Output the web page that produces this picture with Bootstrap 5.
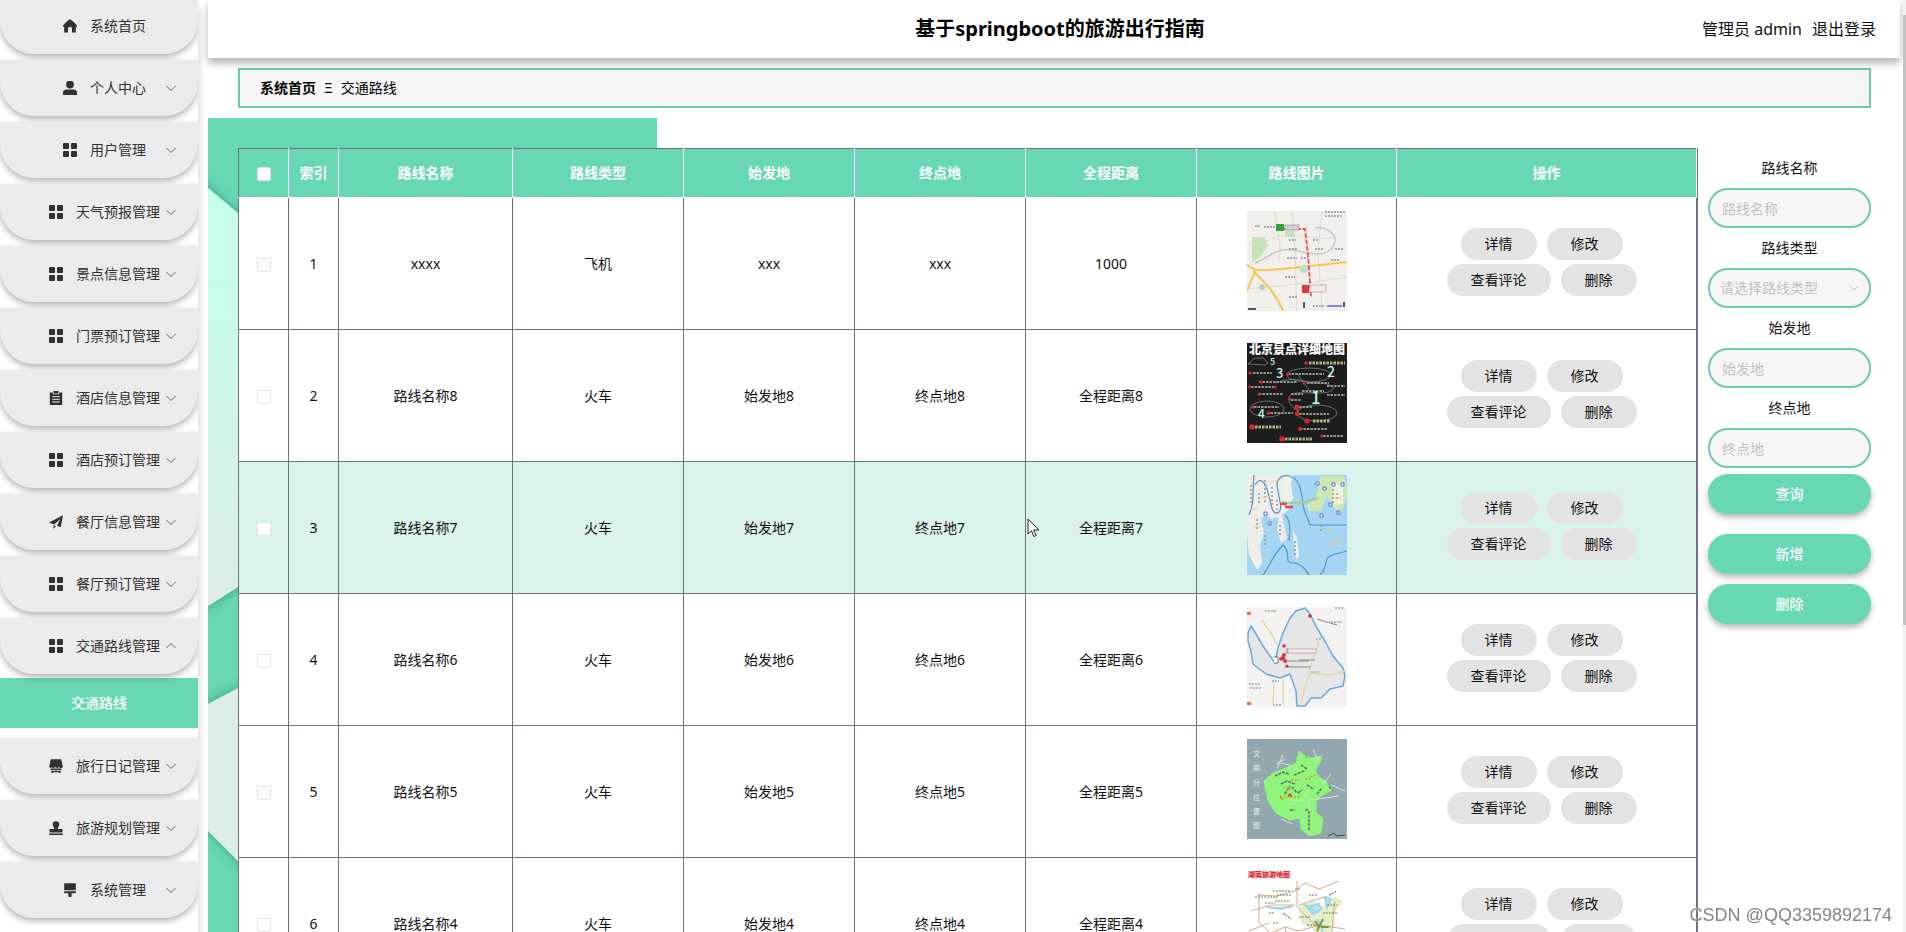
<!DOCTYPE html>
<html lang="zh-CN">
<head>
<meta charset="utf-8">
<meta name="viewport" content="width=device-width, initial-scale=1">
<title>基于springboot的旅游出行指南</title>
<link href="https://cdn.jsdelivr.net/npm/bootstrap@5.3.0/dist/css/bootstrap.min.css" rel="stylesheet">
<style>
:root{--mint:#68d7b4;--line:#6f6f82}
body{font-family:"Noto Sans","Noto Sans CJK SC",sans-serif;font-size:14px;line-height:20px;color:#111;background:#fff}
a{color:inherit;text-decoration:none}
/* sidebar */
.side-menu{width:198px;box-shadow:2px 8px 6px rgba(0,0,0,.14)}
.side-menu nav{margin-top:-8px}
.side-item{height:56px;margin-top:6px;padding-left:11px;gap:13px;background:#ebebeb;border-radius:0 0 34px 34px;box-shadow:0 3px 6px rgba(0,0,0,.3);color:#303133}
.side-item .ico{width:14px;height:14px;fill:#303133}
.side-item .chev{right:22px;width:10px;height:10px;fill:none;stroke:#666}
.side-sub{height:50px;margin:4px 0;background:var(--mint);color:#fff;font-weight:500}
/* header */
.main-area{margin-left:10px;margin-right:6px}
.top-head{height:58px;box-shadow:0 5px 8px rgba(0,0,0,.3);padding:0 24px 0 36px}
.top-head h1{font-size:20px;line-height:28px;color:#000}
.top-head .who{font-size:16px;line-height:24px;gap:10px}
.crumbs{margin:10px 29px 10px 30px;height:40px;padding:0 20px;border:2px solid #6cc9aa;background:#f7f6f6;color:#000}
/* content */
.stage{padding:30px 29px 0 30px}
.backdrop-art{width:449px}
.tbl-wrap{border-right:1px solid var(--line)}
.route-table{table-layout:fixed;width:100%;border-collapse:collapse;text-align:center;color:#111;background:#fff}
.route-table td{border:1px solid var(--line);height:132px;padding:0;vertical-align:middle}
.route-table th{height:49px;padding:0;background:var(--mint);color:#fff;font-weight:700;border:1px solid #fff;border-top-color:var(--line)}
.route-table th:first-child{border-left-color:var(--line)}
.route-table tr.hovered td{background:#daf3ea}
.route-table .form-check-input{width:14px;height:14px;margin:0;border:1px solid #e2e3e6;border-radius:2px;background-color:#fff;vertical-align:middle}
.w-pick{width:50px}.w-name{width:174px}.w-pic{width:200px}.w-ops{width:300px}
.pic{width:100px;height:100px;display:block;margin:0 auto 6px}
.ops{row-gap:4px;padding:0 40px 4px}
.pill{height:32px;padding:0 24px;margin-right:10px;border:0;border-radius:16px;background:#e3e3e3;color:#111}
/* filter column */
.filter-col{width:163px;margin-left:10px}
.filter-col label{height:40px;line-height:40px;text-align:center;display:block;color:#111}
.filter-col .fld{height:40px;width:100%;border:2px solid #6cc9aa;border-radius:20px;background-color:#f7f6f7;padding:0 12px;font-size:14px;color:#c0c1c6}
.filter-col .fld::placeholder{color:#c0c1c6;opacity:1}
.filter-col select.fld{padding:0 10px;appearance:none;background-image:url("data:image/svg+xml,%3Csvg xmlns='http://www.w3.org/2000/svg' width='10' height='10' fill='none' stroke='%23c0c4cc'%3E%3Cpath d='M1 3l4 4 4-4'/%3E%3C/svg%3E");background-repeat:no-repeat;background-position:right 10px center}
.act{height:40px;width:100%;border:0;border-radius:20px;background:var(--mint);color:#fff;font-weight:500;box-shadow:0 3px 6px rgba(0,0,0,.3)}
.act-search{margin:6px 0 20px}
.act-add{margin-bottom:10px}
/* overlays */
.scroll-track{top:0;right:0;width:3px;background:#f1f1f1}
.scroll-thumb{margin-top:15px;height:65.4%;background:#c1c1c1}
.stamp{right:14px;bottom:5px;font:18px/24px "Liberation Sans",sans-serif;color:#858585;text-shadow:0 0 2px #fff}
.pointer-arrow{left:1027px;top:518px;width:13px;height:20px}
</style>
</head>
<body class="vh-100 overflow-hidden">
<svg class="d-none" xmlns="http://www.w3.org/2000/svg">
  <symbol id="i-grid" viewBox="0 0 14 14"><rect width="6" height="6" rx="1"/><rect x="8" width="6" height="6" rx="1"/><rect y="8" width="6" height="6" rx="1"/><rect x="8" y="8" width="6" height="6" rx="1"/></symbol>
  <symbol id="i-home" viewBox="0 0 14 14"><path d="M7 .3C7.500.3 14 5.500 14 7.200c0 .6-.5.800-1.200.8v5.500H9V9.700a2 2 0 0 0-4 0v3.800H1.200V8C.5 8 0 7.800 0 7.200 0 5.500 6.500.3 7 .3z"/></symbol>
  <symbol id="i-user" viewBox="0 0 14 14"><circle cx="7" cy="3.500" r="3.900"/><path d="M0 14v-2.200C0 9.700 1.600 8.600 3.600 8.600h6.800c2 0 3.600 1.100 3.600 3.200V14z"/></symbol>
  <symbol id="i-order" viewBox="0 0 14 14"><path d="M.8 1.500h3V3.300h6.400V1.500h3V14H.8zM4.500 0h5v2.500h-5z"/><path d="M3.200 5.700h7.600M3.200 8.300h7.600M3.200 11h7.600" stroke="#ebebeb" stroke-width="1"/></symbol>
  <symbol id="i-send" viewBox="0 0 14 14"><path d="M14 .3L11.700 12.300 8 10.800 11.300 4 5.200 9.500 0 7.400zM4.500 10.200l2.500 1L4.300 13.800z"/></symbol>
  <symbol id="i-shop" viewBox="0 0 14 14"><path d="M1.800.3h10.400L13.700 7c.3 1.300-.6 2-1.600 2S10.400 8.500 10 8c-.5.600-1 1-1.800 1S6.800 8.500 6.400 8c-.5.600-1 1-1.800 1S3.300 8.600 3 8.200C2.500 8.700 2.200 9 1.600 9 .7 9 0 8.200.3 7zM1.600 9.500h10.800v1.700H1.600zM2.500 12h9v2h-1.500v-.8H4v.8H2.500z"/></symbol>
  <symbol id="i-stamp" viewBox="0 0 14 14"><path d="M5.200 8C5.400 6.500 3.700 5.500 3.700 3.600a3.300 3.300 0 0 1 6.600 0C10.300 5.500 8.600 6.500 8.800 8H13.500v3.500H.5V8zM.2 12.600h13.600V14H.2z"/></symbol>
  <symbol id="i-brush" viewBox="0 0 14 14"><path d="M1.200.3h11.600v7H1.200zM1.200 8.300h11.600v2H8.600V13.500l-1.600 1-1.600-1V10.300H1.200z"/></symbol>
  <symbol id="i-down" viewBox="0 0 10 10"><path d="M.5 3L5 7.500 9.500 3"/></symbol>
  <symbol id="i-up" viewBox="0 0 10 10"><path d="M.5 7L5 2.500 9.500 7"/></symbol>
</svg>

<div class="d-flex h-100">
  <aside class="side-menu flex-shrink-0 h-100">
    <nav class="d-flex flex-column overflow-hidden">
      <a href="#" class="side-item position-relative d-flex align-items-center justify-content-center"><svg class="ico"><use href="#i-home"/></svg>系统首页</a>
      <a href="#" class="side-item position-relative d-flex align-items-center justify-content-center"><svg class="ico"><use href="#i-user"/></svg>个人中心<svg class="chev position-absolute"><use href="#i-down"/></svg></a>
      <a href="#" class="side-item position-relative d-flex align-items-center justify-content-center"><svg class="ico"><use href="#i-grid"/></svg>用户管理<svg class="chev position-absolute"><use href="#i-down"/></svg></a>
      <a href="#" class="side-item position-relative d-flex align-items-center justify-content-center"><svg class="ico"><use href="#i-grid"/></svg>天气预报管理<svg class="chev position-absolute"><use href="#i-down"/></svg></a>
      <a href="#" class="side-item position-relative d-flex align-items-center justify-content-center"><svg class="ico"><use href="#i-grid"/></svg>景点信息管理<svg class="chev position-absolute"><use href="#i-down"/></svg></a>
      <a href="#" class="side-item position-relative d-flex align-items-center justify-content-center"><svg class="ico"><use href="#i-grid"/></svg>门票预订管理<svg class="chev position-absolute"><use href="#i-down"/></svg></a>
      <a href="#" class="side-item position-relative d-flex align-items-center justify-content-center"><svg class="ico"><use href="#i-order"/></svg>酒店信息管理<svg class="chev position-absolute"><use href="#i-down"/></svg></a>
      <a href="#" class="side-item position-relative d-flex align-items-center justify-content-center"><svg class="ico"><use href="#i-grid"/></svg>酒店预订管理<svg class="chev position-absolute"><use href="#i-down"/></svg></a>
      <a href="#" class="side-item position-relative d-flex align-items-center justify-content-center"><svg class="ico"><use href="#i-send"/></svg>餐厅信息管理<svg class="chev position-absolute"><use href="#i-down"/></svg></a>
      <a href="#" class="side-item position-relative d-flex align-items-center justify-content-center"><svg class="ico"><use href="#i-grid"/></svg>餐厅预订管理<svg class="chev position-absolute"><use href="#i-down"/></svg></a>
      <a href="#" class="side-item position-relative d-flex align-items-center justify-content-center"><svg class="ico"><use href="#i-grid"/></svg>交通路线管理<svg class="chev position-absolute"><use href="#i-up"/></svg></a>
      <a href="#" class="side-sub d-flex align-items-center justify-content-center">交通路线</a>
      <a href="#" class="side-item position-relative d-flex align-items-center justify-content-center"><svg class="ico"><use href="#i-shop"/></svg>旅行日记管理<svg class="chev position-absolute"><use href="#i-down"/></svg></a>
      <a href="#" class="side-item position-relative d-flex align-items-center justify-content-center"><svg class="ico"><use href="#i-stamp"/></svg>旅游规划管理<svg class="chev position-absolute"><use href="#i-down"/></svg></a>
      <a href="#" class="side-item mb-3 position-relative d-flex align-items-center justify-content-center"><svg class="ico"><use href="#i-brush"/></svg>系统管理<svg class="chev position-absolute"><use href="#i-down"/></svg></a>
    </nav>
  </aside>

  <div class="main-area flex-grow-1 d-flex flex-column">
    <header class="top-head row g-0 align-items-center flex-shrink-0">
      <div class="col"></div>
      <h1 class="col-auto m-0 fw-bold">基于springboot的旅游出行指南</h1>
      <div class="who col d-flex justify-content-end"><span>管理员 admin</span><a href="#">退出登录</a></div>
    </header>
    <div class="crumbs d-flex align-items-center gap-2 flex-shrink-0"><a href="#" class="fw-bold">系统首页</a><span>Ξ</span><span>交通路线</span></div>

    <main class="stage position-relative d-flex align-items-start flex-grow-1 overflow-hidden">
      <svg class="backdrop-art position-absolute top-0 start-0 h-100" aria-hidden="true">
        <defs>
          <linearGradient id="ga" x1="0" y1="0" x2="0" y2="1"><stop offset="0" stop-color="#c3ffea"/><stop offset=".35" stop-color="#c8fbea"/><stop offset="1" stop-color="#dfebe8"/></linearGradient>
          <filter id="sh" x="-20%" y="-20%" width="140%" height="140%"><feDropShadow dx="0" dy="0" stdDeviation="6" flood-color="#1c5a46" flood-opacity=".45"/></filter>
        </defs>
        <rect width="449" height="100%" fill="#68d7b4"/>
        <path d="M-40 37L0 70 30 95 90 145V433L30 469 0 488-40 512z" fill="url(#ga)" filter="url(#sh)"/>
        <path d="M-40 607L0 586 30 570 90 538V803L30 743 0 713-40 673z" fill="#dbede6" filter="url(#sh)"/>
      </svg>

      <div class="tbl-wrap position-relative flex-grow-1">
        <table class="route-table">
          <colgroup><col class="w-pick"><col class="w-pick"><col class="w-name"><col><col><col><col><col class="w-pic"><col class="w-ops"></colgroup>
          <thead><tr><th><input class="form-check-input" type="checkbox" aria-label="全选"></th><th>索引</th><th>路线名称</th><th>路线类型</th><th>始发地</th><th>终点地</th><th>全程距离</th><th>路线图片</th><th>操作</th></tr></thead>
          <tbody>
            <tr><td><input class="form-check-input" type="checkbox" aria-label="选择1"></td><td>1</td><td>xxxx</td><td>飞机</td><td>xxx</td><td>xxx</td><td>1000</td>
              <td><svg class="pic" viewBox="0 0 100 100"><rect width="100" height="100" fill="#f1efeb"/><path d="M5 26h13l3 8-6 10-10 8zM38 20h10v6H38z" fill="#c6e3b8"/><path d="M0 32c20 5 20-8 40-8s30 6 48 2M28 0c0 20 8 30 4 50M0 78L60 72l40-6M75 0l-4 40 4 60M45 0c4 30 3 60 5 100" stroke="#ddd9d2" fill="none"/><path d="M8 52c10-3 18-12 28-13 12-2 20 4 34 4 10 0 18-6 18-14S76 15 68 17" stroke="#c9c9c9" stroke-width="1.500" fill="none"/><path d="M0 53c4 6 12 7 22 6 20-1 60-6 78-8M8 60L0 80M6 60c10 10 22 20 30 40" stroke="#f6c552" stroke-width="2" fill="none"/><path d="M36 18h22l3 26 3 42" stroke="#e7505e" stroke-width="1.800" stroke-dasharray="5 1.500" fill="none"/><rect x="29" y="13" width="8" height="7" fill="#35a33a"/><rect x="38" y="14" width="14" height="5" fill="#d3cdd8" stroke="#777" stroke-width=".5"/><rect x="55" y="74" width="7" height="8" fill="#d83842"/><rect x="63" y="74" width="16" height="7" fill="#f6e8ea" stroke="#999" stroke-width=".6"/><circle cx="57" cy="58" r="4" fill="#bce0c4"/><circle cx="15" cy="76" r="3" fill="#bccfc4"/><path d="M42 38h8M78 1h20M78 5h18M8 15h6M17 16h11M42 29h7M66 29h6M68 38h8M88 38h9M40 47h10M54 47h7M84 49h9M38 66h10M42 86h8M66 95h12" stroke="#aaa" stroke-width="2" stroke-dasharray="2 1"/><path d="M80 95h15" stroke="#8a85e8" stroke-width="2"/><path d="M57 91v6M97 91v5M1 98h8" stroke="#555" stroke-width="2"/></svg></td>
              <td><div class="ops d-flex flex-wrap justify-content-center"><button class="pill" type="button">详情</button><button class="pill" type="button">修改</button><button class="pill" type="button">查看评论</button><button class="pill" type="button">删除</button></div></td></tr>
            <tr><td><input class="form-check-input" type="checkbox" aria-label="选择2"></td><td>2</td><td>路线名称8</td><td>火车</td><td>始发地8</td><td>终点地8</td><td>全程距离8</td>
              <td><svg class="pic overflow-visible" viewBox="0 0 100 100" font-family="Noto Sans CJK SC"><rect width="100" height="100" fill="#1d1d1d"/><text x="2" y="11" font-size="12" font-weight="900" fill="#fff">北京景点详细地图</text><g fill="none" stroke="#6f8a80" stroke-width=".8"><path d="M1 21l7-6h8l5 5-3 2z"/><ellipse cx="62" cy="32" rx="22" ry="7"/><ellipse cx="20" cy="66" rx="17" ry="8"/><ellipse cx="70" cy="70" rx="20" ry="8"/><path d="M28 40c20-8 30 0 42 0s20 4 14 8-30 0-38 3-4 12 6 18M50 30l14 20"/></g><g stroke="#8f948f" stroke-width="2.200" stroke-dasharray="2.500 1"><path d="M6 30h19M41 31h36M12 39h38M60 40h22M4 44h24M55 48h22M12 51h24M44 51h12M44 57h10M7 64h25M20 70h26M52 64h14M52 71h30M53 86h28M76 93h20M80 43h18M80 52h18"/><path d="M62 20h36M8 84h26M66 78h17M38 96h28" stroke="#b0b284" stroke-width="3"/></g><g fill="#d9242d"><circle cx="3" cy="30" r="1.800"/><circle cx="41" cy="31" r="1.800"/><circle cx="59" cy="20" r="1.800"/><circle cx="14" cy="39" r="1.800"/><circle cx="3" cy="44" r="1.800"/><circle cx="57" cy="40" r="1.600"/><circle cx="12" cy="51" r="1.600"/><circle cx="28" cy="44" r="1.600"/><circle cx="43" cy="56" r="1.600"/><circle cx="50" cy="64" r="2.600"/><circle cx="50" cy="71" r="2.200"/><circle cx="60" cy="78" r="2.600"/><circle cx="5" cy="84" r="2.800"/><circle cx="35" cy="96" r="2.800"/><circle cx="53" cy="86" r="2"/><circle cx="22" cy="70" r="1.800"/><circle cx="6" cy="64" r="1.600"/><circle cx="75" cy="93" r="1.600"/></g><g fill="#c4f3e6" font-weight="500"><text x="23" y="22" font-size="9">5</text><text x="29" y="35" font-size="13">3</text><text x="80" y="34" font-size="14">2</text><text x="64" y="61" font-size="17">1</text><text x="11" y="75" font-size="12">4</text></g></svg></td>
              <td><div class="ops d-flex flex-wrap justify-content-center"><button class="pill" type="button">详情</button><button class="pill" type="button">修改</button><button class="pill" type="button">查看评论</button><button class="pill" type="button">删除</button></div></td></tr>
            <tr class="hovered"><td><input class="form-check-input" type="checkbox" aria-label="选择3"></td><td>3</td><td>路线名称7</td><td>火车</td><td>始发地7</td><td>终点地7</td><td>全程距离7</td>
              <td><svg class="pic" viewBox="0 0 100 100"><rect width="100" height="100" fill="#a5d5f3"/><path d="M0 0h37l5 12v22l-7 6 3 14 2 10-6 4-4-14 2-12-8 2-5-6-5 6 3 14-4 12 2 18-5 7-8-15-2-20z" fill="#eeedea"/><path d="M38 0h8l-2 9 2 14-4 8-6-2zM46 55l4 8 2 18-3 3-2-16z" fill="#eef2e8"/><path d="M73 1h24l3 12v8l-6 17-8-6-6-12-6 16h-12l-2-5 8-8 4-12z" fill="#cfe7b5"/><path d="M84 8h12v20l-9 3z" fill="#eef0df"/><path d="M7 0C5 20 8 25 2 40M8 10c5-8 9-4 12 4 4 12 4 25 10 24 8-1 0-20 0-30 4-12 18-8 22 2 5 12 2 22 8 32 4 8 0 8 9 8h31M38 40c6 6 5 14 4 26M16 100c8-10 8-18 20-30 9 8 0 18 10 18 8 0 12 6 16 12M73 100c10-10 2-16 12-20l15-4" stroke="#4a96cc" stroke-width="1.200" fill="none"/><path d="M35 27c12 2 26 0 36-4" stroke="#a2cf8d" stroke-width="2" fill="none"/><g fill="#fff" stroke="#4f70d8"><path d="M69 7h3v3h-3zM76 12h3v3h-3zM85 8h3v3h-3zM94 8h3v3h-3zM82 28h3v3h-3zM90 36h3v3h-3zM73 39h3v3h-3zM17 37h3v3h-3zM21 47h3v3h-3z"/></g><path d="M4 10v20M12 18v12M18 5v22M25 12v24M30 25v14M18 60v12M10 44v10M33 50v10M48 66v14M74 50v8M86 14v14M90 18v8" stroke="#9b948b" stroke-width="1.500" stroke-dasharray="2 2"/><path d="M33 29h7M38 32h8" stroke="#e14b51" stroke-width="2.500"/><path d="M14 22h9M3 34h8M24 6h8M6 52h8M36 58h10M78 54h8M82 70l12-6M86 23h8" stroke="#e5c98a" stroke-width="1.200"/></svg></td>
              <td><div class="ops d-flex flex-wrap justify-content-center"><button class="pill" type="button">详情</button><button class="pill" type="button">修改</button><button class="pill" type="button">查看评论</button><button class="pill" type="button">删除</button></div></td></tr>
            <tr><td><input class="form-check-input" type="checkbox" aria-label="选择4"></td><td>4</td><td>路线名称6</td><td>火车</td><td>始发地6</td><td>终点地6</td><td>全程距离6</td>
              <td><svg class="pic" viewBox="0 0 100 100"><rect width="100" height="100" fill="#f4f3f1"/><path d="M1 26L4 19 9 27 16 39 28 56 31 41 36 26 43 11 49 4 58 1 63 7 70 21 79 36 86 49 96 61 98 69 96 79 83 82 74 91 64 91 58 99H50L49 84 43 67 33 71 19 67 6 57 4 44 1 34z" fill="#e6e6e6" stroke="#68a9dc" stroke-width="1.500" stroke-linejoin="round"/><path d="M15 13l10 15 5 10M36 72v25M27 72l-1 25M54 96l4-16 5-14 20 2 14-4M62 64l10-30" stroke="#ddd8a8" stroke-width="1.300" fill="none"/><path d="M38 60h26M40 47v-6M52 53h16M70 12l20 6M40 54h22" stroke="#888" fill="none"/><rect x="41" y="42" width="28" height="4" fill="#f8eeee" stroke="#a88" stroke-width=".6"/><path d="M18 4h12M78 15h18M2 77h12M3 81h11M69 32h6M25 74h7M26 98h8M64 65h8M88 1h9" stroke="#bbb" stroke-width="2" stroke-dasharray="2 1"/><g fill="#d8343c"><circle cx="63" cy="9" r="1.800"/><circle cx="37" cy="39" r="1.800"/><circle cx="37" cy="48" r="2"/><circle cx="34" cy="52" r="1.800"/><circle cx="38" cy="54" r="2"/><circle cx="36" cy="51" r="2"/><circle cx="40" cy="59" r="1.600"/></g><path d="M27 50h4v6h-4" stroke="#555" stroke-width=".8" fill="#fff"/><path d="M0 5h4v3H0zM0 95h4v3H0z" fill="#e5713c"/></svg></td>
              <td><div class="ops d-flex flex-wrap justify-content-center"><button class="pill" type="button">详情</button><button class="pill" type="button">修改</button><button class="pill" type="button">查看评论</button><button class="pill" type="button">删除</button></div></td></tr>
            <tr><td><input class="form-check-input" type="checkbox" aria-label="选择5"></td><td>5</td><td>路线名称5</td><td>火车</td><td>始发地5</td><td>终点地5</td><td>全程距离5</td>
              <td><svg class="pic" viewBox="0 0 100 100" font-family="Noto Sans CJK SC"><rect width="100" height="100" fill="#92a8ae"/><path d="M52 12L58 17 64 19 75 17 72 25 68 32 73 39 79 42 81 47 86 50 74 57 69 62V74L76 79 74 94 63 97 54 90 53 79 43 81 29 74 21 62 19 52 17 42 26 34 39 29 49 24z" fill="#8ff57c" stroke="#8ff57c" stroke-linejoin="round"/><path d="M30 30l6-15M33 24l10 2 6 6M71 22l-5-12M76 45l8-10M84 46l14 6M57 58l6-10M62 60v36M64 61l28-4M34 80l12 5M42 61l14 1M38 20l-9 5" stroke="#d4dfda" stroke-width="1" fill="none"/><path d="M28 37l8-4 6 2M47 36l10-4M54 26l6 4M34 45l6-3 8 3M38 55l5-8M45 48l5 6M51 54l4-3M70 55l5-6M82 48l4 3M43 71h5M58 71h4M62 72v20M60 46l6 4" stroke="#57785a" stroke-width="1.600" stroke-dasharray="3 1" fill="none"/><path d="M33 58h20M36 49h8M44 41h8M64 38l4-2M58 40h6M58 18h4" stroke="#d79a3c" stroke-width="1.400" stroke-dasharray="2 1.500"/><path d="M41 57l2-3 2 3zM33 58l3 3" fill="#e04d28" stroke="#e04d28"/><g fill="#e3eaea" font-size="7"><text x="6" y="17">文</text><text x="6" y="31">曲</text><text x="6" y="46">分</text><text x="6" y="61">位</text><text x="6" y="75">置</text><text x="6" y="89">图</text></g><path d="M81 97l6-3 2 3 9-1" stroke="#445" fill="none"/></svg></td>
              <td><div class="ops d-flex flex-wrap justify-content-center"><button class="pill" type="button">详情</button><button class="pill" type="button">修改</button><button class="pill" type="button">查看评论</button><button class="pill" type="button">删除</button></div></td></tr>
            <tr><td><input class="form-check-input" type="checkbox" aria-label="选择6"></td><td>6</td><td>路线名称4</td><td>火车</td><td>始发地4</td><td>终点地4</td><td>全程距离4</td>
              <td><svg class="pic overflow-visible" viewBox="0 0 100 100" font-family="Noto Sans CJK SC"><rect width="100" height="100" fill="#fff"/><text x="1" y="6" font-size="7" font-weight="900" fill="#e8232b">湖南旅游地图</text><path d="M52 36l14-6 8 6 6-4 8-6 8 4-10 14 2 10-8 10-10 4-4-10-12-6z" fill="#e4eecb"/><path d="M60 36l12-3 2 5-8 5zM78 26l6 2-4 8zM20 36l14 2 12-3M70 48l6 12M56 33l16 9" stroke="#9bd4ec" stroke-width="2" fill="#bfe4f2"/><path d="M10 24l20 1 18-5 10-8 14 6 20-8M12 22v30l12 10 14-6 14 4 20-6 26 4M50 10v26l20 20 8 30M24 62L10 90M38 56l4 40M4 40l20-6 24 0M52 34l26-8M88 30l-4 40 8 20M2 60l20-8" stroke="#dba98a" stroke-width="1" fill="none"/><path d="M26 20h18M30 24h14M8 26h24M18 32h10M22 42h6M36 42l8 6M52 46h12M60 54h14M76 42h14M80 34h10M26 52h6M62 24h8M28 30h14M48 18h5M82 24l8-4" stroke="#64885c" stroke-width="1.200" stroke-dasharray="2 1"/><path d="M70 60l6-12M74 56h8M68 50l4 6" stroke="#7d9b3e" stroke-width="2"/></svg></td>
              <td><div class="ops d-flex flex-wrap justify-content-center"><button class="pill" type="button">详情</button><button class="pill" type="button">修改</button><button class="pill" type="button">查看评论</button><button class="pill" type="button">删除</button></div></td></tr>
          </tbody>
        </table>
      </div>

      <form class="filter-col flex-shrink-0">
        <label for="f-name">路线名称</label><input id="f-name" class="fld" type="text" placeholder="路线名称">
        <label for="f-type">路线类型</label><select id="f-type" class="fld"><option>请选择路线类型</option><option>火车</option><option>飞机</option></select>
        <label for="f-from">始发地</label><input id="f-from" class="fld" type="text" placeholder="始发地">
        <label for="f-to">终点地</label><input id="f-to" class="fld" type="text" placeholder="终点地">
        <button class="act act-search d-block" type="button">查询</button>
        <button class="act act-add d-block" type="button">新增</button>
        <button class="act d-block" type="button">删除</button>
      </form>
    </main>
  </div>
</div>

<div class="scroll-track position-fixed h-100 d-flex flex-column"><div class="scroll-thumb"></div></div>
<div class="stamp position-fixed">CSDN @QQ3359892174</div>
<svg class="pointer-arrow position-fixed" viewBox="0 0 13 20" aria-hidden="true"><path d="M1 1v15l3.500-3.200 2.400 5.700 2.300-1-2.400-5.500H12z" fill="#fff" stroke="#222"/></svg>
<script src="https://cdn.jsdelivr.net/npm/bootstrap@5.3.0/dist/js/bootstrap.bundle.min.js"></script>
</body>
</html>
